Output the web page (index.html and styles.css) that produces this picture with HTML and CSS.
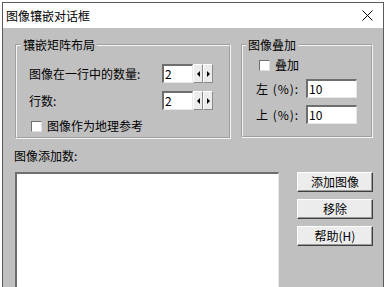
FILE: index.html
```html
<!DOCTYPE html>
<html>
    <head>
        <link rel="stylesheet" href="styles.css">
    </head>
    <body>
        <div class="window">
            <div class="titlebar">
                <span class="title">图像镶嵌对话框</span>
                <svg class="close" width="11" height="11" viewBox="0 0 11 11">
                    <path d="M0.5 0.5 L10.5 10.5 M10.5 0.5 L0.5 10.5" stroke="#000" stroke-width="1"/>
                </svg>
            </div>
            <div class="content">
                <div class="toprow">
                    <fieldset class="group layout">
                        <legend>镶嵌矩阵布局</legend>
                        <div class="row">
                            <span class="label">图像在一行中的数量:</span>
                            <div class="edit small">2</div>
                            <div class="spin"><span class="tri left"></span></div>
                            <div class="spin"><span class="tri right"></span></div>
                        </div>
                        <div class="row">
                            <span class="label">行数:</span>
                            <div class="edit small">2</div>
                            <div class="spin"><span class="tri left"></span></div>
                            <div class="spin"><span class="tri right"></span></div>
                        </div>
                        <div class="checkrow">
                            <span class="check"></span>
                            <span>图像作为地理参考</span>
                        </div>
                    </fieldset>
                    <fieldset class="group overlay">
                        <legend>图像叠加</legend>
                        <div class="checkrow">
                            <span class="check"></span>
                            <span>叠加</span>
                        </div>
                        <div class="row">
                            <span class="label short">左 (%):</span>
                            <div class="edit wide">10</div>
                        </div>
                        <div class="row">
                            <span class="label short">上 (%):</span>
                            <div class="edit wide">10</div>
                        </div>
                    </fieldset>
                </div>
                <div class="addlabel">图像添加数:</div>
                <div class="bottomrow">
                    <div class="listbox"></div>
                    <div class="buttons">
                        <div class="button">添加图像</div>
                        <div class="button">移除</div>
                        <div class="button">帮助(H)</div>
                    </div>
                </div>
            </div>
        </div>
    </body>
</html>
```

FILE: styles.css
```css
body {
    margin: 0;
    overflow: hidden;
    background: #ffffff;
    font-family: "Noto Sans CJK SC", "Noto Sans", sans-serif;
    font-size: 12px;
    color: #000000;
}
.window {
    box-sizing: border-box;
    margin: 2px 0 0 2px;
    width: 382px;
    height: 285px;
    overflow: hidden;
    border: 1px solid #5a5a5a;
    border-bottom: none;
    background: #c0c0c0;
}
.titlebar {
    height: 25px;
    background: #ffffff;
    display: flex;
    align-items: center;
    justify-content: space-between;
    padding: 0 10px 0 3px;
    line-height: 14px;
}
.close {
    display: block;
}
.content {
    padding: 10px 10px 0 12px;
}
.toprow {
    display: flex;
    align-items: flex-start;
    gap: 10px;
}
.group {
    box-sizing: border-box;
    margin: 0;
    height: 101px;
    border: 2px groove #f4f4f4;
    min-width: 0;
}
.group legend {
    padding: 0 2px;
    line-height: 14px;
}
.layout {
    width: 216px;
    padding: 12px 0 0 12px;
}
.layout legend {
    margin-left: -8px;
}
.overlay {
    width: 132px;
    height: 100px;
    padding: 6px 0 0 13px;
}
.overlay legend {
    margin-left: -10px;
}
.row {
    display: flex;
    align-items: center;
    height: 19px;
    margin-bottom: 8px;
}
.overlay .row {
    margin-bottom: 0;
    margin-top: 7px;
}
.label {
    width: 133px;
    line-height: 14px;
    white-space: nowrap;
}
.label.short {
    width: 50px;
    letter-spacing: 1px;
}
.edit {
    box-sizing: border-box;
    height: 19px;
    background: #ffffff;
    border-top: 2px solid #6e6e6e;
    border-left: 2px solid #6e6e6e;
    border-right: 1px solid #e8e8e8;
    border-bottom: 1px solid #e8e8e8;
    line-height: 15px;
    padding-left: 1px;
}
.edit.small {
    width: 31px;
}
.edit.wide {
    width: 51px;
}
.spin {
    box-sizing: border-box;
    width: 10px;
    height: 19px;
    background: #ececec;
    border-top: 1px solid #ffffff;
    border-left: 1px solid #ffffff;
    border-right: 1px solid #8a8a8a;
    border-bottom: 1px solid #8a8a8a;
    display: flex;
    align-items: center;
    justify-content: center;
}
.tri {
    width: 0;
    height: 0;
    border-top: 3px solid transparent;
    border-bottom: 3px solid transparent;
}
.tri.left {
    border-right: 3px solid #000000;
}
.tri.right {
    border-left: 3px solid #000000;
}
.checkrow {
    display: flex;
    align-items: center;
    height: 16px;
    padding-left: 2px;
    gap: 5px;
    line-height: 14px;
}
.overlay .checkrow {
    height: 14px;
    padding-left: 3px;
}
.check {
    box-sizing: border-box;
    width: 11px;
    height: 11px;
    background: #ffffff;
    border-top: 1px solid #6e6e6e;
    border-left: 1px solid #6e6e6e;
    border-right: 1px solid #e0e0e0;
    border-bottom: 1px solid #e0e0e0;
}
.addlabel {
    margin-top: 10px;
    line-height: 14px;
    margin-left: -1px;
}
.bottomrow {
    display: flex;
    align-items: flex-start;
    gap: 18px;
    margin-top: 9px;
}
.listbox {
    box-sizing: border-box;
    width: 265px;
    height: 130px;
    background: #ffffff;
    border-top: 2px solid #6e6e6e;
    border-left: 2px solid #6e6e6e;
    border-right: 1px solid #e8e8e8;
}
.buttons {
    display: flex;
    flex-direction: column;
    gap: 7px;
}
.button {
    box-sizing: border-box;
    width: 76px;
    height: 20px;
    background: #ececec;
    border-top: 1px solid #ffffff;
    border-left: 1px solid #ffffff;
    border-right: 1px solid #404040;
    border-bottom: 1px solid #404040;
    box-shadow: inset -1px -1px 0 #9a9a9a;
    text-align: center;
    line-height: 17px;
}
```
